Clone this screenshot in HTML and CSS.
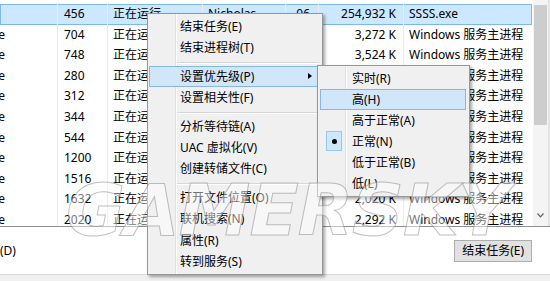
FILE: index.html
```html
<!DOCTYPE html>
<html lang="zh-CN">
<head>
<meta charset="utf-8">
<title>任务管理器</title>
<link rel="stylesheet" href="styles.css">
</head>
<body>
<div class="window">
  <div class="list">
    <div class="rows">
      <div class="row selected">
        <div class="c name"></div>
        <div class="c pid">456</div>
        <div class="c status">正在运行</div>
        <div class="c user">Nicholas</div>
        <div class="c cpu">06</div>
        <div class="c mem">254,932 K</div>
        <div class="c desc">SSSS.exe</div>
      </div>
      <div class="row">
        <div class="c name"><span class="clip"><span>svchost.exe</span></span></div>
        <div class="c pid">704</div>
        <div class="c status">正在运行</div>
        <div class="c user">SYSTEM</div>
        <div class="c cpu">00</div>
        <div class="c mem">3,272 K</div>
        <div class="c desc">Windows 服务主进程</div>
      </div>
      <div class="row">
        <div class="c name"><span class="clip"><span>svchost.exe</span></span></div>
        <div class="c pid">748</div>
        <div class="c status">正在运行</div>
        <div class="c user">NETWORK</div>
        <div class="c cpu">00</div>
        <div class="c mem">3,524 K</div>
        <div class="c desc">Windows 服务主进程</div>
      </div>
      <div class="row">
        <div class="c name"><span class="clip"><span>svchost.exe</span></span></div>
        <div class="c pid">280</div>
        <div class="c status">正在运行</div>
        <div class="c user">LOCAL</div>
        <div class="c cpu">00</div>
        <div class="c mem">9,844 K</div>
        <div class="c desc">Windows 服务主进程</div>
      </div>
      <div class="row">
        <div class="c name"><span class="clip"><span>svchost.exe</span></span></div>
        <div class="c pid">312</div>
        <div class="c status">正在运行</div>
        <div class="c user">SYSTEM</div>
        <div class="c cpu">00</div>
        <div class="c mem">21,460 K</div>
        <div class="c desc">Windows 服务主进程</div>
      </div>
      <div class="row">
        <div class="c name"><span class="clip"><span>svchost.exe</span></span></div>
        <div class="c pid">344</div>
        <div class="c status">正在运行</div>
        <div class="c user">LOCAL</div>
        <div class="c cpu">00</div>
        <div class="c mem">6,112 K</div>
        <div class="c desc">Windows 服务主进程</div>
      </div>
      <div class="row">
        <div class="c name"><span class="clip"><span>svchost.exe</span></span></div>
        <div class="c pid">544</div>
        <div class="c status">正在运行</div>
        <div class="c user">NETWORK</div>
        <div class="c cpu">00</div>
        <div class="c mem">4,988 K</div>
        <div class="c desc">Windows 服务主进程</div>
      </div>
      <div class="row">
        <div class="c name"><span class="clip"><span>svchost.exe</span></span></div>
        <div class="c pid">1200</div>
        <div class="c status">正在运行</div>
        <div class="c user">LOCAL</div>
        <div class="c cpu">00</div>
        <div class="c mem">1,736 K</div>
        <div class="c desc">Windows 服务主进程</div>
      </div>
      <div class="row">
        <div class="c name"><span class="clip"><span>svchost.exe</span></span></div>
        <div class="c pid">1516</div>
        <div class="c status">正在运行</div>
        <div class="c user">SYSTEM</div>
        <div class="c cpu">00</div>
        <div class="c mem">2,404 K</div>
        <div class="c desc">Windows 服务主进程</div>
      </div>
      <div class="row">
        <div class="c name"><span class="clip"><span>svchost.exe</span></span></div>
        <div class="c pid">1632</div>
        <div class="c status">正在运行</div>
        <div class="c user">LOCAL</div>
        <div class="c cpu">00</div>
        <div class="c mem">2,020 K</div>
        <div class="c desc">Windows 服务主进程</div>
      </div>
      <div class="row">
        <div class="c name"><span class="clip"><span>svchost.exe</span></span></div>
        <div class="c pid">2020</div>
        <div class="c status">正在运行</div>
        <div class="c user">NETWORK</div>
        <div class="c cpu">00</div>
        <div class="c mem">2,292 K</div>
        <div class="c desc">Windows 服务主进程</div>
      </div>
    </div>
    <div class="scrollbar">
      <div class="thumb"></div>
      <div class="arrow-down">
        <svg width="7" height="5" viewBox="0 0 7 5"><path d="M0.5 0.5 L3.5 3.8 L6.5 0.5" fill="none" stroke="#606060" stroke-width="1.2"/></svg>
      </div>
    </div>
    <div class="edge"></div>
  </div>
  <div class="footer">
    <span class="less">(D)</span>
    <button class="btn">结束任务(E)</button>
  </div>
  <div class="strip"></div>
</div>

<div class="menu main-menu">
  <div class="mi">结束任务(E)</div>
  <div class="mi">结束进程树(T)</div>
  <div class="sep"></div>
  <div class="mi hot">设置优先级(P)<span class="sub-arrow"></span></div>
  <div class="mi">设置相关性(F)</div>
  <div class="sep"></div>
  <div class="mi">分析等待链(A)</div>
  <div class="mi">UAC 虚拟化(V)</div>
  <div class="mi">创建转储文件(C)</div>
  <div class="sep"></div>
  <div class="mi">打开文件位置(O)</div>
  <div class="mi">联机搜索(N)</div>
  <div class="mi">属性(R)</div>
  <div class="mi">转到服务(S)</div>
</div>

<div class="menu sub-menu">
  <div class="mi">实时(R)</div>
  <div class="mi hot">高(H)</div>
  <div class="mi">高于正常(A)</div>
  <div class="mi checked"><span class="bullet"></span>正常(N)</div>
  <div class="mi">低于正常(B)</div>
  <div class="mi">低(L)</div>
</div>

<div class="watermark" aria-hidden="true">GAMERSKY</div>
</body>
</html>
```

FILE: styles.css
```css
html, body {
  margin: 0;
  padding: 0;
}
body {
  position: relative;
  width: 550px;
  height: 281px;
  overflow: hidden;
  background: #ffffff;
  font-family: "Noto Sans", "Noto Sans CJK SC", sans-serif;
  font-size: 12px;
  color: #000;
}
.window {
  display: flex;
  flex-direction: column;
  height: 281px;
}
.list {
  display: flex;
  height: 227px;
  box-sizing: border-box;
  border-bottom: 1px solid #8f8f8f;
  overflow: hidden;
}
.rows {
  width: 533px;
  padding-top: 4px;
  box-sizing: border-box;
}
.row {
  display: grid;
  grid-template-columns: 57px 50px 95px 83px 33px 85px 129px;
  width: 532px;
  height: 20.6px;
  line-height: 20.6px;
}
.row.selected {
  background: #cce8ff;
  box-shadow: inset 0 0 0 1px #7db9e8;
}
.c {
  overflow: hidden;
  white-space: nowrap;
  box-sizing: border-box;
  border-left: 1px solid #ececec;
}
.name {
  border-left: none;
  display: flex;
}
.clip {
  width: 5px;
  overflow: hidden;
  display: flex;
  justify-content: flex-end;
}
.clip span {
  flex: none;
}
.pid { padding-left: 6px; }
.status { padding-left: 5px; }
.user { padding-left: 5px; }
.cpu { text-align: right; padding-right: 8px; }
.mem { text-align: right; padding-right: 7px; }
.desc { padding-left: 5px; }

.scrollbar {
  width: 15px;
  background: #f4f4f4;
  display: flex;
  flex-direction: column;
  align-items: center;
  padding-top: 5px;
  box-sizing: border-box;
}
.thumb {
  width: 13px;
  height: 120px;
  background: #cdcdcd;
}
.arrow-down {
  margin-top: 86px;
  height: 8px;
  display: flex;
  align-items: center;
}
.edge {
  width: 2px;
  background: #e3e3e3;
}

.footer {
  height: 47px;
  display: flex;
  align-items: center;
  justify-content: space-between;
}
.btn {
  margin-right: 18px;
  height: 22px;
  padding: 0 7px;
  background: #e1e1e1;
  border: 1px solid #adadad;
  border-radius: 0;
  font-family: "Noto Sans", "Noto Sans CJK SC", sans-serif;
  font-size: 12px;
  color: #000;
  line-height: 20px;
}
.strip {
  flex: 1;
  background: #f0f0f0;
  border-top: 1px solid #dadada;
}

.menu {
  position: absolute;
  box-sizing: border-box;
  background: #f0f0f0;
  border: 1px solid #979797;
  padding: 2px;
  box-shadow: 2px 2px 3px rgba(0, 0, 0, 0.35);
}
.menu::before {
  content: "";
  position: absolute;
  left: 27px;
  top: 0;
  bottom: 0;
  width: 1px;
  background: #e0e0e0;
  box-shadow: 1px 0 0 #ffffff;
}
.main-menu {
  left: 147px;
  top: 13px;
  width: 176px;
}
.sub-menu {
  left: 317px;
  top: 65px;
  width: 153px;
}
.mi {
  position: relative;
  height: 21.4px;
  line-height: 21.4px;
  padding-left: 30px;
  white-space: nowrap;
}
.sub-menu .mi {
  height: 21px;
  line-height: 21px;
  padding-left: 32px;
}
.mi.hot {
  background: #d1e6f8;
  box-shadow: inset 0 0 0 1px #84b8e8;
}
.main-menu .mi.hot {
  margin: 0 2px 0 -1px;
  padding-left: 31px;
}
.sub-menu .mi.hot {
  margin-right: 1px;
}
.sep {
  height: 7px;
  margin-left: 27px;
  margin-right: 1px;
  display: flex;
  align-items: center;
}
.sep::after {
  content: "";
  flex: 1;
  height: 1px;
  background: #d7d7d7;
  box-shadow: 0 1px 0 #ffffff;
}
.sub-arrow {
  position: absolute;
  right: 6px;
  top: 7px;
  width: 0;
  height: 0;
  border-left: 4px solid #000;
  border-top: 3.5px solid transparent;
  border-bottom: 3.5px solid transparent;
}
.bullet {
  position: absolute;
  left: 6px;
  top: 0;
  width: 16px;
  height: 20px;
  box-sizing: border-box;
  background: #cce8ff;
  border: 1px solid #98c8ee;
}
.bullet::after {
  content: "";
  position: absolute;
  left: 5px;
  top: 7px;
  width: 5px;
  height: 5px;
  border-radius: 50%;
  background: #000;
}

.watermark {
  position: absolute;
  left: 66px;
  top: 168px;
  font-family: "DejaVu Sans", sans-serif;
  font-weight: bold;
  font-style: italic;
  font-size: 72px;
  letter-spacing: -1px;
  color: rgba(255, 255, 255, 0.45);
  -webkit-text-stroke: 1px rgba(140, 140, 140, 0.55);
  pointer-events: none;
  white-space: nowrap;
}
```
